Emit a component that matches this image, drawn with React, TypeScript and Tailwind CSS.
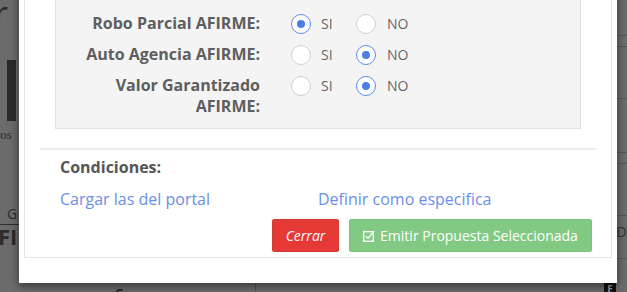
import React from "react";

function Radio({ checked }: { checked: boolean }) {
  return (
    <span
      className={
        "flex h-[20px] w-[20px] shrink-0 items-center justify-center rounded-full border bg-white " +
        (checked ? "border-[#5b8be6]" : "border-[#cfcfcf]")
      }
    >
      {checked && <span className="h-[8px] w-[8px] rounded-full bg-[#4a7fe3]" />}
    </span>
  );
}

function Choice({ si }: { si: boolean }) {
  return (
    <div className="flex items-center">
      <Radio checked={si} />
      <span className="ml-[10px] w-[35px] text-[14px] text-[#666]">SI</span>
      <Radio checked={!si} />
      <span className="ml-[11px] text-[14px] text-[#666]">NO</span>
    </div>
  );
}

export default function App() {
  const font = { fontFamily: '"Open Sans", "Noto Sans", sans-serif' };
  return (
    <div
      className="relative h-[292px] w-[627px] overflow-hidden bg-[#6b6b6b]"
      style={font}
    >
      {/* dimmed page behind the modal */}
      <div className="absolute left-[-6px] top-[-4px] flex w-[20px] flex-col items-start text-[#2b2b2b]">
        <div className="text-[34px] leading-none">r</div>
        <div className="ml-[13px] mt-[30px] h-[61px] w-[9px] bg-[#2a2a2a]" />
        <div className="ml-[2px] mt-[4px] text-[13px]" style={{ fontFamily: '"Liberation Serif", serif' }}>ros</div>
        <div className="ml-[13px] mt-[58px] text-[14px]">G</div>
        <div className="h-px w-[26px] bg-[#2e2e2e]" />
        <div className="ml-[4px] text-[22px] font-bold leading-none">FI</div>
      </div>
      <div className="absolute left-[617px] top-[35px] flex w-[10px] flex-col text-[#333]">
        <div className="h-px bg-[#555]" />
        <div className="mt-[10px] h-px bg-[#555]" />
        <div className="mt-[51px] h-px bg-[#555]" />
        <div className="mt-[53px] h-px bg-[#555]" />
        <div className="mt-[10px] h-px bg-[#555]" />
        <div className="mt-[51px] h-px bg-[#555]" />
        <div className="-ml-[1px] mt-[5px] text-[15px] leading-[20px]">D</div>
        <div className="mt-[17px] h-px bg-[#555]" />
      </div>
      <div className="absolute left-[604px] top-[283px] h-[12px] w-[12px] bg-[#111] text-center text-[10px] font-bold leading-[12px] text-[#999]">E</div>
      <div className="absolute left-[115px] top-[282px] flex items-start text-[13px] font-bold text-[#222]">
        <span className="mt-[2px] w-[140px]">C</span>
        <span className="h-[12px] w-px bg-[#555]" />
      </div>

      {/* modal */}
      <div className="absolute left-[19px] top-[-60px] w-[598px] bg-white pb-[25px] pl-[5px] pr-[5px] shadow-[0_3px_9px_rgba(0,0,0,0.5)]">
        <div className="border border-[#e6e6e6] pb-[5px] pl-[30px] pr-[30px] pt-[30px]">
          <div className="border border-[#e0e0e0] bg-[#f4f4f4] pb-[11px] pt-[36px]">
            <div className="flex h-[31px] items-center">
              <div className="w-[204px] text-right text-[16px] font-bold leading-[21px] text-[#5e5e5e]">Robo Parcial AFIRME:</div>
              <div className="ml-[31px]">
                <Choice si={true} />
              </div>
            </div>
            <div className="flex h-[31px] items-center">
              <div className="w-[204px] text-right text-[16px] font-bold leading-[21px] text-[#5e5e5e]">Auto Agencia AFIRME:</div>
              <div className="ml-[31px]">
                <Choice si={false} />
              </div>
            </div>
            <div className="flex items-start pt-[5px]">
              <div className="w-[204px] text-right text-[16px] font-bold leading-[21px] text-[#5e5e5e]">
                Valor Garantizado
                <br />
                AFIRME:
              </div>
              <div className="ml-[31px] flex h-[21px] items-center">
                <Choice si={false} />
              </div>
            </div>
          </div>

          <div className="-mx-[15px] mt-[19px] h-[2px] bg-[#ececec]" />

          <div className="pl-[5px]">
            <div className="mt-[5px] text-[16px] font-bold text-[#555]">Condiciones:</div>
            <div className="mt-[8px] flex text-[16px] text-[#6a8fe6]">
              <span className="w-[258px]">Cargar las del portal</span>
              <span>Definir como especifica</span>
            </div>
          </div>
          <div className="mt-[8px] flex justify-end gap-[10px]">
            <button className="h-[33px] w-[67px] rounded-[2px] border border-[#d23a36] bg-[#e53935] text-[14px] italic text-white">
              Cerrar
            </button>
            <button className="-mr-[11px] flex h-[33px] w-[243px] items-center justify-center gap-[5px] rounded-[2px] border border-[#7cc07e] bg-[#82ca84] text-[14px] text-white">
              <svg width="12" height="12" viewBox="0 0 12 12" fill="none" stroke="white" strokeWidth="1.3">
                <rect x="0.7" y="1.7" width="9.6" height="9.6" />
                <path d="M2.8 6.2 L5 8.4 L11 1" />
              </svg>
              <span>Emitir Propuesta Seleccionada</span>
            </button>
          </div>
        </div>
      </div>
    </div>
  );
}
